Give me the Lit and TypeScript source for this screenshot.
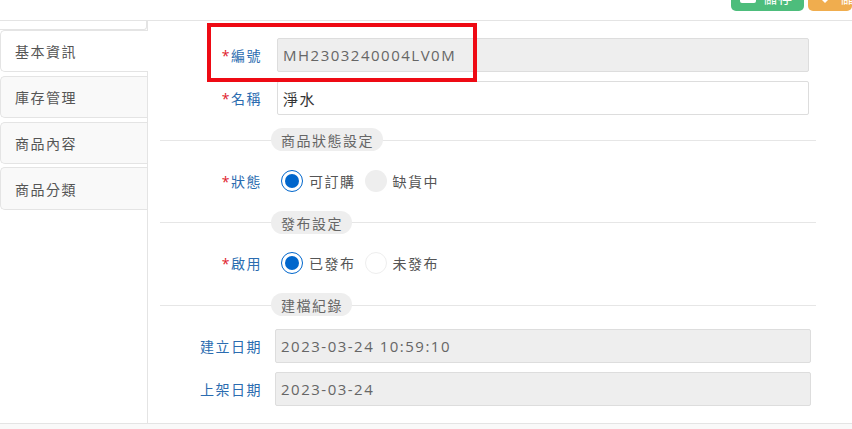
import { LitElement, html, css } from "lit";
import { customElement } from "lit/decorators.js";

@customElement("app-root")
export class AppRoot extends LitElement {
  static styles = css`
    :host { display: block; width: 852px; height: 429px; overflow: hidden; position: relative; background: #fff;
      font-family: "Open Sans", "Noto Sans CJK TC", sans-serif; font-size: 14px; color: #555; }
    .top { height: 11px; padding-bottom: 9px; border-bottom: 1px solid #e4e4e4; display: flex; justify-content: flex-end; align-items: flex-start; gap: 4px; overflow: hidden; }
    .btn { width: 73px; height: 11px; flex: none; border-radius: 0 0 5px 5px; background: #4dbd7c; color: #fff; display: flex; align-items: flex-end; justify-content: flex-start; padding-left: 9px; box-sizing: border-box; font-size: 14px; line-height: 18px; letter-spacing: 1px; overflow: hidden; }
    .btn.o { background: #f0ad4e; width: 44px; padding-left: 14px; }
    .btn span { flex: none; margin-bottom: 4px; }
    .ic { width: 16px; height: 12px; background: #fff; border-radius: 2px; margin-bottom: 8px !important; margin-right: 7px; }
    .tri { width: 0; height: 0; border: 3px solid transparent; border-top-color: #fff; margin-bottom: 5px !important; margin-right: 12px; }
    .main { display: flex; height: 402px; border-bottom: 1px solid #e4e4e4; }
    .side { width: 147px; border-right: 1px solid #e4e4e4; flex: none; display: flex; flex-direction: column; }
    .sliver { height: 9px; border: 1px solid #e4e4e4; border-top: 0; border-left: 0; border-radius: 0 0 3px 0; box-sizing: border-box; }
    .tab { height: 42px; box-sizing: border-box; margin-top: 4px; border: 1px solid #e4e4e4; border-right: 0; border-radius: 5px 0 0 5px; background: #f9f9f9; padding-left: 14px; display: flex; align-items: center; letter-spacing: 1.5px; color: #555; font-size: 14px; }
    .tab.a { margin-top: 0; background: #fff; margin-right: -1px; }
    .tab.l { margin-top: 3px; height: 43px; }
    .content { flex: 1; padding: 17px 36px 0 12px; }
    .row { display: flex; align-items: center; height: 34px; margin-bottom: 9px; }
    .label { width: 117px; padding-right: 15px; box-sizing: border-box; text-align: right; color: #2b6cb0; letter-spacing: 1.5px; flex: none; font-size: 14px; }
    .req { color: #e0202a; }
    .field { width: 532px; height: 34px; box-sizing: border-box; border: 1px solid #ddd; border-radius: 2px; padding: 0 5px; display: flex; align-items: center; letter-spacing: 1.5px; color: #333; font-size: 15px; }
    .field.d { background: #eee; color: #666; }
    .sec { position: relative; display: flex; align-items: center; height: 23px; margin: 13px 0; }
    .sec::before { content: ""; position: absolute; left: 0; right: 0; top: 12px; border-top: 1px solid #e6e6e6; }
    .sec.next { margin-bottom: 12px; }
    .sec.next::before { top: 11px; }
    .pill { position: relative; margin-left: 111px; height: 23px; padding: 0 9px 0 10px; background: #eee; border-radius: 12px; display: flex; align-items: center; letter-spacing: 1.5px; font-size: 14px; color: #666; }
    .r { margin-bottom: 13px; }
    .radios { display: flex; align-items: center; letter-spacing: 1.5px; margin-left: 4px; color: #555; }
    .radio { width: 22px; height: 22px; border-radius: 50%; box-sizing: border-box; margin-right: 6px; flex: none; display: flex; align-items: center; justify-content: center; }
    .radio.on { border: 1px solid #0066cc; }
    .radio.on::after { content: ""; width: 14px; height: 14px; border-radius: 50%; background: #0066cc; }
    .radio.dis { background: #eee; }
    .radio.off { border: 1px solid #eee; }
    .opt { margin-right: 9px; }
    .wide { width: 536px; margin-left: -2px; }
    .foot { height: 5px; background: #f9f9f9; }
    .rbox { position: absolute; left: 207px; top: 23px; width: 270px; height: 59px; box-sizing: border-box; border: 4px solid #ee0a14; }
  `;

  render() {
    return html`
      <div class="top">
        <div class="btn"><span class="ic"></span><span>儲存</span></div>
        <div class="btn o"><span class="tri"></span><span>儲</span></div>
      </div>
      <div class="main">
        <div class="side">
          <div class="sliver"></div>
          <div class="tab a">基本資訊</div>
          <div class="tab">庫存管理</div>
          <div class="tab">商品內容</div>
          <div class="tab l">商品分類</div>
        </div>
        <div class="content">
          <div class="row"><div class="label"><span class="req">*</span>編號</div><div class="field d">MH2303240004LV0M</div></div>
          <div class="row"><div class="label"><span class="req">*</span>名稱</div><div class="field">淨水</div></div>
          <div class="sec"><div class="pill">商品狀態設定</div></div>
          <div class="row r"><div class="label"><span class="req">*</span>狀態</div>
            <div class="radios"><span class="radio on"></span><span class="opt">可訂購</span><span class="radio dis"></span><span>缺貨中</span></div></div>
          <div class="sec next"><div class="pill">發布設定</div></div>
          <div class="row r"><div class="label"><span class="req">*</span>啟用</div>
            <div class="radios"><span class="radio on"></span><span class="opt">已發布</span><span class="radio off"></span><span>未發布</span></div></div>
          <div class="sec"><div class="pill">建檔紀錄</div></div>
          <div class="row"><div class="label">建立日期</div><div class="field d wide">2023-03-24 10:59:10</div></div>
          <div class="row"><div class="label">上架日期</div><div class="field d wide">2023-03-24</div></div>
        </div>
      </div>
      <div class="foot"></div>
      <div class="rbox"></div>
    `;
  }
}
